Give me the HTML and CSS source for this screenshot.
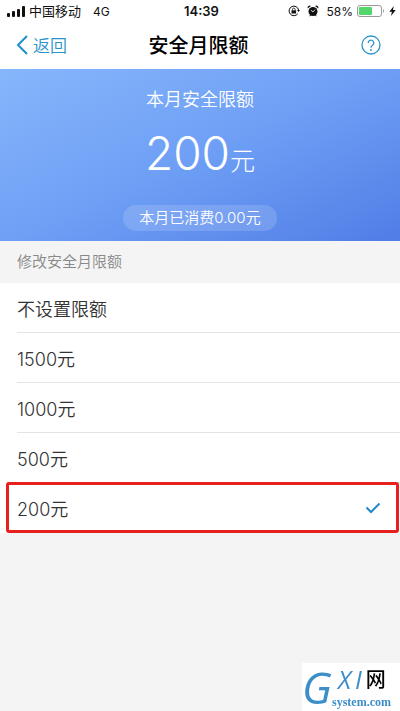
FILE: index.html
```html
<!DOCTYPE html>
<html lang="zh-CN">
<head>
    <meta charset="UTF-8">
    <meta name="viewport" content="width=device-width, initial-scale=1.0">
    <title>安全月限额</title>
    <link rel="stylesheet" href="styles.css">
</head>
<body>
    <div class="status-bar">
        <div class="status-left">
            <svg class="signal" width="18" height="11" viewBox="0 0 18 11" fill="#111">
                <rect x="0" y="7" width="3" height="4" rx="1"/>
                <rect x="5" y="5" width="3" height="6" rx="1"/>
                <rect x="10" y="3" width="3" height="8" rx="1"/>
                <rect x="15" y="0" width="3" height="11" rx="1"/>
            </svg>
            <span class="carrier">中国移动</span>
            <span>4G</span>
        </div>
        <div class="status-time">14:39</div>
        <div class="status-right">
            <svg width="12" height="12" viewBox="0 0 12 12" fill="none" stroke="#111">
                <path d="M9.8 8.7A4.8 4.8 0 1 1 10.6 5"/>
                <path d="M9 5h3l-1.4 2z" fill="#111" stroke="none"/>
                <rect x="3.5" y="5.3" width="4.6" height="3.2" fill="#111" stroke="none"/>
                <path d="M4.5 5.5V4.4a1.3 1.3 0 0 1 2.6 0v1.1" stroke-width=".8"/>
            </svg>
            <svg class="alarm" width="12" height="12" viewBox="0 0 12 12" fill="#111">
                <circle cx="6" cy="6.5" r="4.5"/>
                <path d="M.6 3.4A2.2 2.2 0 0 1 4 1zM11.4 3.4A2.2 2.2 0 0 0 8 1zM2 11.5l1.5-2 1 .8zM10 11.5l-1.5-2-1 .8z"/>
                <path d="M4 5.2L6 7l2-2.4" fill="none" stroke="#fff" stroke-width=".8"/>
            </svg>
            <span>58%</span>
            <svg class="battery" width="28" height="12" viewBox="0 0 28 12">
                <rect x=".5" y=".5" width="24" height="11" rx="2.5" fill="#fff" stroke="#999"/>
                <rect x="2" y="2" width="13" height="8" rx="1" fill="#53d769"/>
                <path d="M26 4v4q2-2 0-4z" fill="#999"/>
            </svg>
            <svg class="bolt" width="7" height="10" viewBox="0 0 7 10" fill="#111">
                <path d="M4.8 0L.3 5.8h2.6L2 10l4.7-6H4z"/>
            </svg>
        </div>
    </div>

    <header class="nav">
        <a class="back" href="#">
            <svg width="12" height="20" viewBox="0 0 12 20" fill="none" stroke="#1e8fd0" stroke-width="2">
                <path d="M11 1L2 10l9 9"/>
            </svg>
            返回
        </a>
        <h1>安全月限额</h1>
        <button class="help" type="button" aria-label="帮助">
            <svg width="20" height="20" viewBox="0 0 20 20" fill="none" stroke="#2b94cc" stroke-width="1.3">
                <circle cx="10" cy="10" r="9"/>
                <path d="M7.2 8a2.8 2.8 0 1 1 4.3 2.3Q10 11.2 10 12.8"/>
                <circle cx="10" cy="15" r=".9" fill="#2b94cc" stroke="none"/>
            </svg>
        </button>
    </header>

    <main>
        <section class="summary">
            <p class="summary-title">本月安全限额</p>
            <p class="amount">200<span class="unit">元</span></p>
            <p class="spent">本月已消费0.00元</p>
        </section>

        <form class="limits">
            <h2>修改安全月限额</h2>
            <label class="option">
                <span>不设置限额</span>
                <input type="radio" name="limit" value="0">
            </label>
            <label class="option">
                <span>1500元</span>
                <input type="radio" name="limit" value="1500">
            </label>
            <label class="option">
                <span>1000元</span>
                <input type="radio" name="limit" value="1000">
            </label>
            <label class="option">
                <span>500元</span>
                <input type="radio" name="limit" value="500">
            </label>
            <label class="option marked">
                <span>200元</span>
                <input type="radio" name="limit" value="200" checked>
                <svg class="check" width="16" height="12" viewBox="0 0 16 12" fill="none" stroke="#1e88c8" stroke-width="2">
                    <path d="M1.5 5.5l4.5 4.5L14.5 1.5"/>
                </svg>
            </label>
        </form>
    </main>

    <div class="watermark">
        <span class="mark-g">G</span>
        <div class="mark-text">
            <div class="mark-top"><i>X</i><i>I</i><b>网</b></div>
            <div class="mark-site">system.com</div>
        </div>
    </div>
</body>
</html>
```
FILE: styles.css
```css
* {
    box-sizing: border-box;
}

body {
    margin: 0;
    min-height: 100vh;
    background-color: #f4f4f4;
    font-family: Inter, "Noto Sans CJK SC", sans-serif;
    color: #333;
}

h1, h2, p {
    margin: 0;
    font-weight: inherit;
}

/* status bar */
.status-bar {
    display: grid;
    grid-template-columns: 1fr auto 1fr;
    align-items: center;
    height: 22px;
    padding: 0 4px 0 7px;
    background-color: #fff;
    color: #111;
    font-size: 12px;
}

.status-left, .status-right {
    display: flex;
    align-items: center;
}

.status-right {
    justify-content: flex-end;
}

.signal {
    margin-right: 4px;
}

.carrier {
    margin-right: 12px;
    font-size: 13px;
    line-height: 20px;
}

.status-time {
    font-size: 13px;
    font-weight: 600;
}

.alarm {
    margin: 0 7px;
}

.battery {
    margin: 0 4px;
}

/* title bar */
.nav {
    display: grid;
    grid-template-columns: 1fr auto 1fr;
    align-items: center;
    height: 47px;
    padding: 0 19px 2px 16px;
    background-color: #fff;
}

.back {
    display: flex;
    align-items: center;
    gap: 5px;
    color: #2b94cc;
    font-size: 17px;
    font-weight: 350;
    text-decoration: none;
}

.nav h1 {
    color: #000;
    font-size: 20px;
    font-weight: 500;
}

.help {
    justify-self: end;
    display: flex;
    padding: 0;
    border: none;
    background: none;
    cursor: pointer;
}

/* blue card */
.summary {
    display: flex;
    flex-direction: column;
    align-items: center;
    padding: 18px 0 10px;
    background: linear-gradient(155deg, #86b6fb 0%, #6e9ff5 50%, #507de6 100%);
    color: #fff;
    font-weight: 350;
}

.summary-title {
    font-size: 18px;
    line-height: 26px;
}

.amount {
    margin-top: 8px;
    font-size: 46px;
    font-weight: 300;
    line-height: 64px;
}

.unit {
    font-size: 25px;
    line-height: 1;
}

.spent {
    margin-top: 20px;
    padding: 0 16px;
    border-radius: 13px;
    background-color: rgba(255, 255, 255, 0.15);
    font-size: 15px;
    line-height: 26px;
}

/* limit list */
.limits {
    font-weight: 350;
}

.limits h2 {
    padding-left: 17px;
    color: #888;
    font-size: 15px;
    line-height: 42px;
}

.option {
    position: relative;
    display: flex;
    align-items: center;
    justify-content: space-between;
    height: 50px;
    padding: 0 19px 0 17px;
    background-color: #fff;
    font-size: 18px;
    cursor: pointer;
}

.option:not(.marked)::after {
    content: "";
    position: absolute;
    left: 17px;
    right: 0;
    bottom: 0;
    height: 1px;
    background-color: #e4e4e4;
}

.option input {
    position: absolute;
    opacity: 0;
}

/* red frame round the chosen row */
.marked::after {
    content: "";
    position: absolute;
    inset: -1px 1px 0 6px;
    border: 3px solid #e6201c;
    border-radius: 3px;
}

/* site mark in the corner */
.watermark {
    position: fixed;
    right: 0;
    bottom: 0;
    display: flex;
    width: 98px;
    height: 48px;
    background-color: #fff;
    color: #3d8dc8;
}

.mark-g {
    width: 30px;
    font: italic 44px/48px "Open Sans", sans-serif;
}

.mark-top {
    display: flex;
    align-items: center;
    gap: 4px;
    height: 32px;
    padding-left: 6px;
    font: 25px/32px "Open Sans", sans-serif;
}

.mark-top b {
    color: #000;
    font: 500 20px/32px "Noto Sans CJK SC", sans-serif;
}

.mark-site {
    font: bold 12px/14px "Liberation Serif", serif;
}
```
